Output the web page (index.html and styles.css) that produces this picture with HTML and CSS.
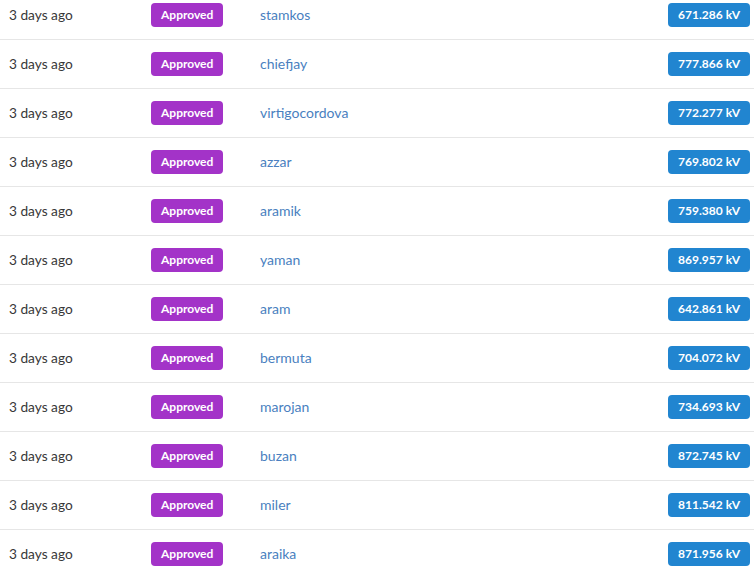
FILE: index.html
```html
<!DOCTYPE html>
<html lang="en">
<head>
  <meta charset="UTF-8">
  <title>Approvals</title>
  <link rel="stylesheet" href="styles.css">
</head>
<body>
  <div class="table">
    <div class="row"><span class="time">3 days ago</span><span><span class="label purple">Approved</span></span><a class="name" href="#">stamkos</a><span class="label blue">671.286 kV</span></div>
    <div class="row"><span class="time">3 days ago</span><span><span class="label purple">Approved</span></span><a class="name" href="#">chiefjay</a><span class="label blue">777.866 kV</span></div>
    <div class="row"><span class="time">3 days ago</span><span><span class="label purple">Approved</span></span><a class="name" href="#">virtigocordova</a><span class="label blue">772.277 kV</span></div>
    <div class="row"><span class="time">3 days ago</span><span><span class="label purple">Approved</span></span><a class="name" href="#">azzar</a><span class="label blue">769.802 kV</span></div>
    <div class="row"><span class="time">3 days ago</span><span><span class="label purple">Approved</span></span><a class="name" href="#">aramik</a><span class="label blue">759.380 kV</span></div>
    <div class="row"><span class="time">3 days ago</span><span><span class="label purple">Approved</span></span><a class="name" href="#">yaman</a><span class="label blue">869.957 kV</span></div>
    <div class="row"><span class="time">3 days ago</span><span><span class="label purple">Approved</span></span><a class="name" href="#">aram</a><span class="label blue">642.861 kV</span></div>
    <div class="row"><span class="time">3 days ago</span><span><span class="label purple">Approved</span></span><a class="name" href="#">bermuta</a><span class="label blue">704.072 kV</span></div>
    <div class="row"><span class="time">3 days ago</span><span><span class="label purple">Approved</span></span><a class="name" href="#">marojan</a><span class="label blue">734.693 kV</span></div>
    <div class="row"><span class="time">3 days ago</span><span><span class="label purple">Approved</span></span><a class="name" href="#">buzan</a><span class="label blue">872.745 kV</span></div>
    <div class="row"><span class="time">3 days ago</span><span><span class="label purple">Approved</span></span><a class="name" href="#">miler</a><span class="label blue">811.542 kV</span></div>
    <div class="row"><span class="time">3 days ago</span><span><span class="label purple">Approved</span></span><a class="name" href="#">araika</a><span class="label blue">871.956 kV</span></div>
  </div>
</body>
</html>
```

FILE: styles.css
```css
body {
  margin: 0;
  background: #fff;
  font-family: 'Lato', 'Helvetica Neue', Arial, sans-serif;
  font-size: 14px;
  color: rgba(0,0,0,0.87);
  overflow: hidden;
}
.table {
  margin-top: -9px;
}
.row {
  display: grid;
  grid-template-columns: 142px 109px 1fr auto;
  align-items: center;
  height: 48px;
  padding: 0 4px 0 9px;
  border-bottom: 1px solid #e6e6e6;
}
.time {
  color: #383838;
  font-size: 13.7px;
  padding-bottom: 2px;
}
.name {
  color: #4a7fc0;
  text-decoration: none;
  padding-bottom: 2px;
}
.label {
  display: inline-block;
  height: 24px;
  line-height: 24px;
  padding: 0 10px;
  border-radius: 4px;
  font-size: 12px;
  font-weight: 700;
  color: #fff;
}
.label.purple { background: #a333c8; }
.label.blue { background: #2185d0; }
```
